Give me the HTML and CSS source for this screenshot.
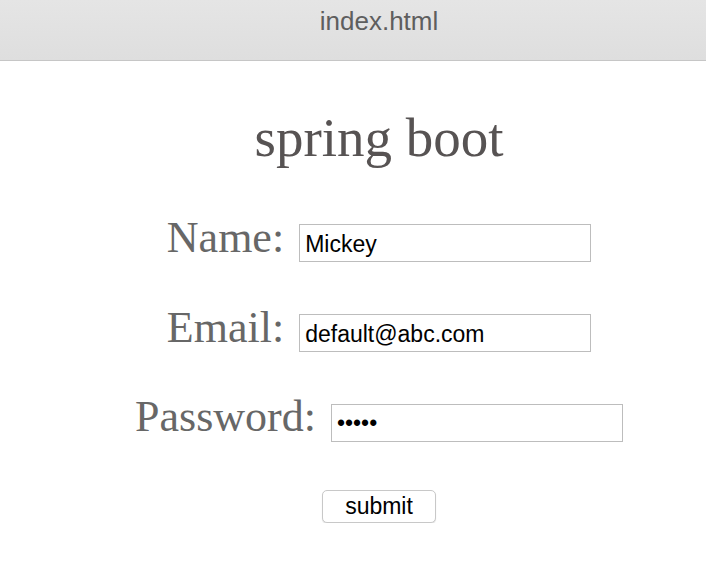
FILE: index.html
```html
<!DOCTYPE html>
<html>
<head>
<meta charset="utf-8">
<title>index.html</title>
<link rel="stylesheet" href="styles.css">
</head>
<body>
<header class="titlebar"><span class="titlebar-text">index.html</span></header>
<main class="page">
  <h1 class="heading">spring boot</h1>
  <form class="form">
    <div class="row"><label class="label" for="name">Name:</label><input class="field" id="name" type="text" value="Mickey"></div>
    <div class="row"><label class="label" for="email">Email:</label><input class="field" id="email" type="text" value="default@abc.com"></div>
    <div class="row"><label class="label" for="pw">Password:</label><input class="field" id="pw" type="password" value="12345"></div>
    <button class="submit" type="button">submit</button>
  </form>
</main>
</body>
</html>
```
FILE: styles.css
```css
html, body {
  margin: 0;
  padding: 0;
  background: #ffffff;
}
.titlebar {
  display: flex;
  justify-content: center;
  box-sizing: border-box;
  height: 61px;
  padding: 6px 0 0 52px;
  background: linear-gradient(#e5e5e5, #dedede);
  border-bottom: 1px solid #c6c6c6;
}
.titlebar-text {
  font-family: "Liberation Sans", Arial, sans-serif;
  font-size: 26px;
  line-height: 30px;
  color: #5e5e5e;
}
.page {
  display: flex;
  flex-direction: column;
  align-items: center;
  padding: 47px 0 0 52px;
}
.heading {
  margin: 0;
  font-family: "Liberation Serif", "Times New Roman", serif;
  font-weight: normal;
  font-size: 55px;
  line-height: 60px;
  color: #575353;
}
.form {
  display: flex;
  flex-direction: column;
  align-items: center;
  gap: 43.25px;
  margin-top: 47.75px;
}
.row {
  display: flex;
  align-items: baseline;
  gap: 15px;
}
.label {
  font-family: "Liberation Serif", "Times New Roman", serif;
  font-size: 44px;
  line-height: 44px;
  color: #676767;
}
.field {
  box-sizing: border-box;
  width: 292px;
  height: 38px;
  margin: 0;
  padding: 2px 6px 0 5px;
  border: 1px solid #bdbdbd;
  border-radius: 0;
  outline: none;
  font-family: "Liberation Sans", Arial, sans-serif;
  font-size: 23px;
  color: #000000;
  background: #ffffff;
}
.submit {
  box-sizing: border-box;
  width: 114px;
  height: 33px;
  margin-top: 5px;
  padding: 0;
  border: 1px solid #c8c8c8;
  border-radius: 5px;
  background: #ffffff;
  box-shadow: 0 1px 1px rgba(0, 0, 0, 0.12);
  font-family: "Liberation Sans", Arial, sans-serif;
  font-size: 23px;
  color: #000000;
}
```
